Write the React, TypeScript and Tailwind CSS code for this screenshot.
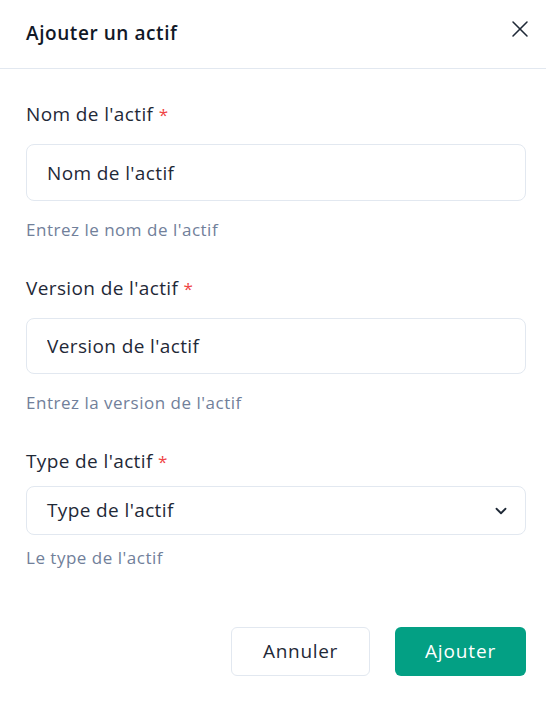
import { ChevronDown, X } from "lucide-react";

const font = { fontFamily: '"Open Sans", "Noto Sans", sans-serif' };

const Label = ({ children }: { children: React.ReactNode }) => (
  <label className="block h-6 text-[19px] leading-6 tracking-[0.02em] text-[#1f2937]">
    {children} <span className="text-[17px] leading-none text-[#ef4444]">*</span>
  </label>
);

const Help = ({ children }: { children: React.ReactNode }) => (
  <p className="text-[17px] leading-5 tracking-[0.03em] text-[#71809a]">{children}</p>
);

export default function App() {
  return (
    <div className="w-[546px] h-[710px] bg-white" style={font}>
      <header className="h-[69px] pl-[26px] pr-[20px] flex items-center justify-between border-b border-[#e2e8f0]">
        <h2 className="text-[19px] font-semibold tracking-[0.03em] text-[#111827] -mt-[2px]">Ajouter un actif</h2>
        <button className="text-[#1f2937] -mr-[8px] -mt-[10px]">
          <X className="w-[28px] h-[28px]" strokeWidth={1.3} />
        </button>
      </header>

      <form className="pl-[26px] pr-[20px] pt-[33px]">
        <Label>Nom de l'actif</Label>
        <input
          placeholder="Nom de l'actif"
          className="mt-[18px] w-full h-[57px] rounded-lg border border-[#e2e8f0] px-5 text-[19px] tracking-[0.02em] text-[#1f2937] placeholder:text-[#1f2937] outline-none"
        />
        <div className="mt-[19px]">
          <Help>Entrez le nom de l'actif</Help>
        </div>

        <div className="mt-[36px]">
          <Label>Version de l'actif</Label>
        </div>
        <input
          placeholder="Version de l'actif"
          className="mt-[18px] w-full h-[56px] rounded-lg border border-[#e2e8f0] px-5 text-[19px] tracking-[0.02em] text-[#1f2937] placeholder:text-[#1f2937] outline-none"
        />
        <div className="mt-[19px]">
          <Help>Entrez la version de l'actif</Help>
        </div>

        <div className="mt-[36px]">
          <Label>Type de l'actif</Label>
        </div>
        <button
          type="button"
          className="mt-[13px] w-full h-[49px] rounded-lg border border-[#e2e8f0] pl-5 pr-[15px] flex items-center justify-between text-[19px] tracking-[0.02em] text-[#1f2937]"
        >
          <span>Type de l'actif</span>
          <ChevronDown className="w-[18px] h-[18px]" strokeWidth={2.4} />
        </button>
        <div className="mt-[13px]">
          <Help>Le type de l'actif</Help>
        </div>

        <div className="mt-[59px] flex justify-end gap-[25px]">
          <button
            type="button"
            className="w-[139px] h-[49px] rounded-md border border-[#e2e8f0] text-[19px] tracking-[0.035em] text-[#1f2937] bg-white"
          >
            Annuler
          </button>
          <button
            type="button"
            className="w-[131px] h-[49px] rounded-md bg-[#03a084] text-[19px] tracking-[0.045em] text-white"
          >
            Ajouter
          </button>
        </div>
      </form>
    </div>
  );
}
